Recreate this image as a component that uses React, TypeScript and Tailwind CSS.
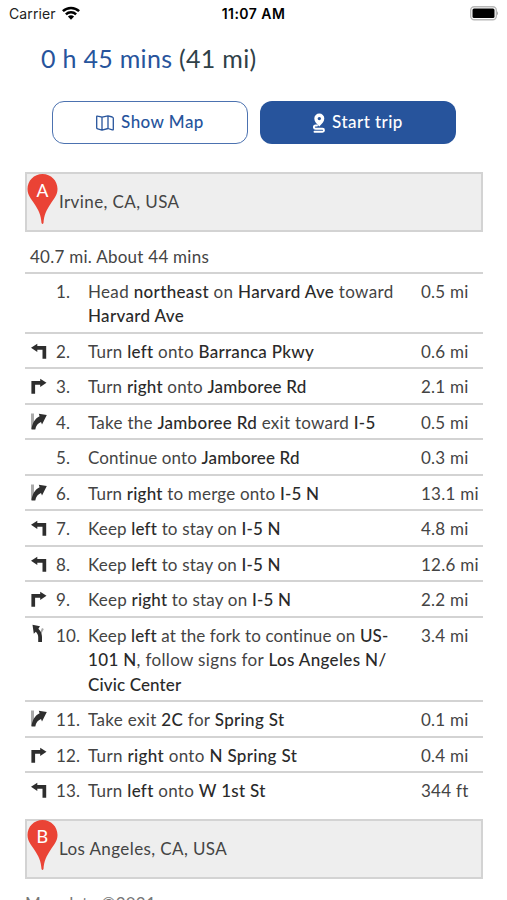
import React from 'react';

type Maneuver = 'none' | 'left' | 'right' | 'ramp' | 'fork';

interface Step {
  maneuver: Maneuver;
  body: React.ReactNode;
  distance: string;
  tracking: string;
}

const B: React.FC<{ children: React.ReactNode }> = ({ children }) => (
  <b className="font-medium text-[#2a2a2a]">{children}</b>
);

const steps: Step[] = [
  { maneuver: 'none', distance: '0.5 mi', tracking: 'tracking-[0.34px]', body: <>Head <B>northeast</B> on <B>Harvard Ave</B> toward<br /><B>Harvard Ave</B></> },
  { maneuver: 'left', distance: '0.6 mi', tracking: 'tracking-[0.28px]', body: <>Turn <B>left</B> onto <B>Barranca Pkwy</B></> },
  { maneuver: 'right', distance: '2.1 mi', tracking: 'tracking-[0.22px]', body: <>Turn <B>right</B> onto <B>Jamboree Rd</B></> },
  { maneuver: 'ramp', distance: '0.5 mi', tracking: 'tracking-[0.27px]', body: <>Take the <B>Jamboree Rd</B> exit toward <B>I-5</B></> },
  { maneuver: 'none', distance: '0.3 mi', tracking: 'tracking-[0.13px]', body: <>Continue onto <B>Jamboree Rd</B></> },
  { maneuver: 'ramp', distance: '13.1 mi', tracking: 'tracking-[0.2px]', body: <>Turn <B>right</B> to merge onto <B>I-5 N</B></> },
  { maneuver: 'left', distance: '4.8 mi', tracking: 'tracking-[0.17px]', body: <>Keep <B>left</B> to stay on <B>I-5 N</B></> },
  { maneuver: 'left', distance: '12.6 mi', tracking: 'tracking-[0.17px]', body: <>Keep <B>left</B> to stay on <B>I-5 N</B></> },
  { maneuver: 'right', distance: '2.2 mi', tracking: 'tracking-[0.2px]', body: <>Keep <B>right</B> to stay on <B>I-5 N</B></> },
  { maneuver: 'fork', distance: '3.4 mi', tracking: 'tracking-[0.13px]', body: <>Keep <B>left</B> at the fork to continue on <B>US-</B><br /><span className="tracking-[0.34px]"><B>101 N</B>, follow signs for <B>Los Angeles N/</B></span><br /><B>Civic Center</B></> },
  { maneuver: 'ramp', distance: '0.1 mi', tracking: 'tracking-[0.34px]', body: <>Take exit <B>2C</B> for <B>Spring St</B></> },
  { maneuver: 'right', distance: '0.4 mi', tracking: 'tracking-[0.34px]', body: <>Turn <B>right</B> onto <B>N Spring St</B></> },
  { maneuver: 'left', distance: '344 ft', tracking: 'tracking-[0.3px]', body: <>Turn <B>left</B> onto <B>W 1st St</B></> },
];

const ManeuverIcon: React.FC<{ type: Maneuver }> = ({ type }) => {
  if (type === 'none') return null;
  return (
    <svg viewBox="0 0 16 18" className="h-[18px] w-4 overflow-visible" fill="#2e2e2e">
      {type === 'left' && <path d="M0 4.800 6.300 0.700v2.300h8.900V15.800h-3.700V6.800H6.300V9z" />}
      {type === 'right' && <path d="M15.500 4.800 9.200 0.700v2.300H0.400V15.800h3.700V6.800h5.100V9z" />}
      {type === 'ramp' && (
        <>
          <path fill="#aaa" d="M0 -0.500h3v15.500H0z" />
          <path d="M15.800 1.100 7.800 -0.300l.8 2.600C4 4.500 1.200 9 0.500 15.500h3.800c.5-4 2.600-6.300 5.700-7.600l1 2.500z" />
        </>
      )}
      {type === 'fork' && (
        <>
          <path fill="#aaa" d="M9 5.500 11 1l1.800 1-2.800 5.500z" />
          <path d="M1.500 -2.300 9 -0.700 7.400 1.700C10 4.500 11 7 11 10v5H7.200v-5c0-2-.9-3.700-2.400-5.300L2.800 6.700z" />
        </>
      )}
    </svg>
  );
};

const Place: React.FC<{ letter: string; name: string }> = ({ letter, name }) => (
  <div className="flex h-[60px] items-center border-2 border-[#d3d3d3] bg-[#eeeeee]">
    <svg viewBox="0 0 30 50" className="mb-[7px] h-[50px] w-[31px] shrink-0">
      <path fill="#ea4335" d="M15 0C6.500 0 0 6.700 0 15c0 6 3.500 9.800 7 15 4 6 6.500 11 7 19q1 2 2 0c.5-8 3-13 7-19 3.500-5.200 7-9 7-15C30 6.700 23.500 0 15 0z" />
      <text x="15" y="22.500" textAnchor="middle" fill="#fff" fontSize="19" fontFamily="Roboto, sans-serif">{letter}</text>
    </svg>
    <span className="pt-px pl-px tracking-[0.4px]">{name}</span>
  </div>
);

const StatusBar: React.FC = () => (
  <div className="grid h-7 grid-cols-3 items-center px-[9px] font-[Inter,sans-serif] text-[14px] text-[#222]">
    <div className="flex items-center gap-[6px] tracking-[0.1px]">
      Carrier
      <svg viewBox="0 0 18 14" className="-mt-0.5 h-[14px] w-[18px]" fill="none" stroke="#000" strokeWidth="2.500">
        <path d="M0.900 5.200a11.600 11.600 0 0 1 16.200 0M3.900 8.300a7.300 7.300 0 0 1 10.200 0" />
        <path fill="#000" stroke="none" d="M5.900 10.600a4.500 4.500 0 0 1 6.200 0L9 13.800z" />
      </svg>
    </div>
    <div className="text-center font-semibold tracking-[0.45px] text-black">11:07 AM</div>
    <svg viewBox="0 0 31 15" className="-mt-0.5 h-[15px] w-[31px] justify-self-end">
      <rect x="3.700" y="0.700" width="25.600" height="13.100" rx="3.500" fill="#fff" stroke="#b8b8b8" strokeWidth="1.400" />
      <rect x="5.500" y="2.500" width="22" height="9.500" rx="1.500" fill="#000" />
      <path fill="#aaa" d="M29.800 5q1.200 1 1.200 2.300t-1.200 2.300z" />
    </svg>
  </div>
);

export default function App() {
  return (
    <div className="h-[900px] overflow-hidden bg-white font-[Lato,sans-serif] text-[17px] leading-[24.5px] text-[#444]">
      <StatusBar />
      <h1 className="mt-[14px] ml-[41px] text-[25px] leading-8 tracking-[0.3px] text-[#2f4148]">
        <span className="text-[#27549c]">0 h 45 mins</span> (41 mi)
      </h1>
      <div className="mt-[27px] ml-[52px] flex gap-3 font-medium tracking-[0.45px]">
        <button className="flex h-[43px] w-[196px] items-center justify-center gap-[7px] rounded-[12px] border-[1.500px] border-[#4c72b0] text-[#27549c]">
          <svg viewBox="0 0 18 16" className="mt-px h-4 w-[18px]" fill="none" stroke="currentColor" strokeWidth="1.300" strokeLinejoin="round">
            <path d="M0.700 1.800q0-1 1-.7L6 2.200 12 0.900l4.300 1.100q1 .3 1 1.200v11q0 1-1 .7L12 13.500 6 15.100 1.700 13.900q-1-.3-1-1.200zM6 2.200v12.900M12 0.900v12.600" />
          </svg>
          Show Map
        </button>
        <button className="flex h-[43px] w-[196px] items-center justify-center gap-[7px] rounded-[12px] bg-[#27549c] text-white">
          <svg viewBox="0 0 12 20" className="h-5 w-3" fill="none" stroke="#fff">
            <path fill="#fff" fillRule="evenodd" stroke="none" d="M6.300 .5a5 5 0 0 1 5 5c0 3-2.500 5.500-5 8-2.500-2.500-5-5-5-8a5 5 0 0 1 5-5zm0 3.400a1.700 1.700 0 1 0 0 3.400 1.700 1.700 0 0 0 0-3.400z" />
            <path strokeWidth="1.900" strokeLinecap="round" d="M4 12.500H2.500a1.600 1.600 0 0 0 0 3.200h7a1.500 1.500 0 0 1 0 3H1.500" />
          </svg>
          Start trip
        </button>
      </div>
      <main className="mt-7 ml-[25px] w-[458px]">
        <Place letter="A" name="Irvine, CA, USA" />
        <div className="h-[39.5px] pt-[13px] pl-[5px] tracking-[0.26px]">40.7 mi. About 44 mins</div>
        <ol>
          {steps.map((step, i) => (
            <li key={i} className="flex items-start border-t-2 border-[#d3d3d3] pt-[6px] pb-[3px]">
              <div className="flex w-[31px] shrink-0 pt-[3px] pl-[6px]">
                <ManeuverIcon type={step.maneuver} />
              </div>
              <div className="w-8 shrink-0 tracking-[0.1px]">{i + 1}.</div>
              <div className={`flex-1 whitespace-nowrap ${step.tracking}`}>{step.body}</div>
              <div className="w-[62px] shrink-0 whitespace-nowrap tracking-[0.25px]">{step.distance}</div>
            </li>
          ))}
        </ol>
        <div className="mt-3">
          <Place letter="B" name="Los Angeles, CA, USA" />
        </div>
        <footer className="mt-[13px] tracking-[0.2px] text-[#777]">Map data ©2021</footer>
      </main>
    </div>
  );
}
